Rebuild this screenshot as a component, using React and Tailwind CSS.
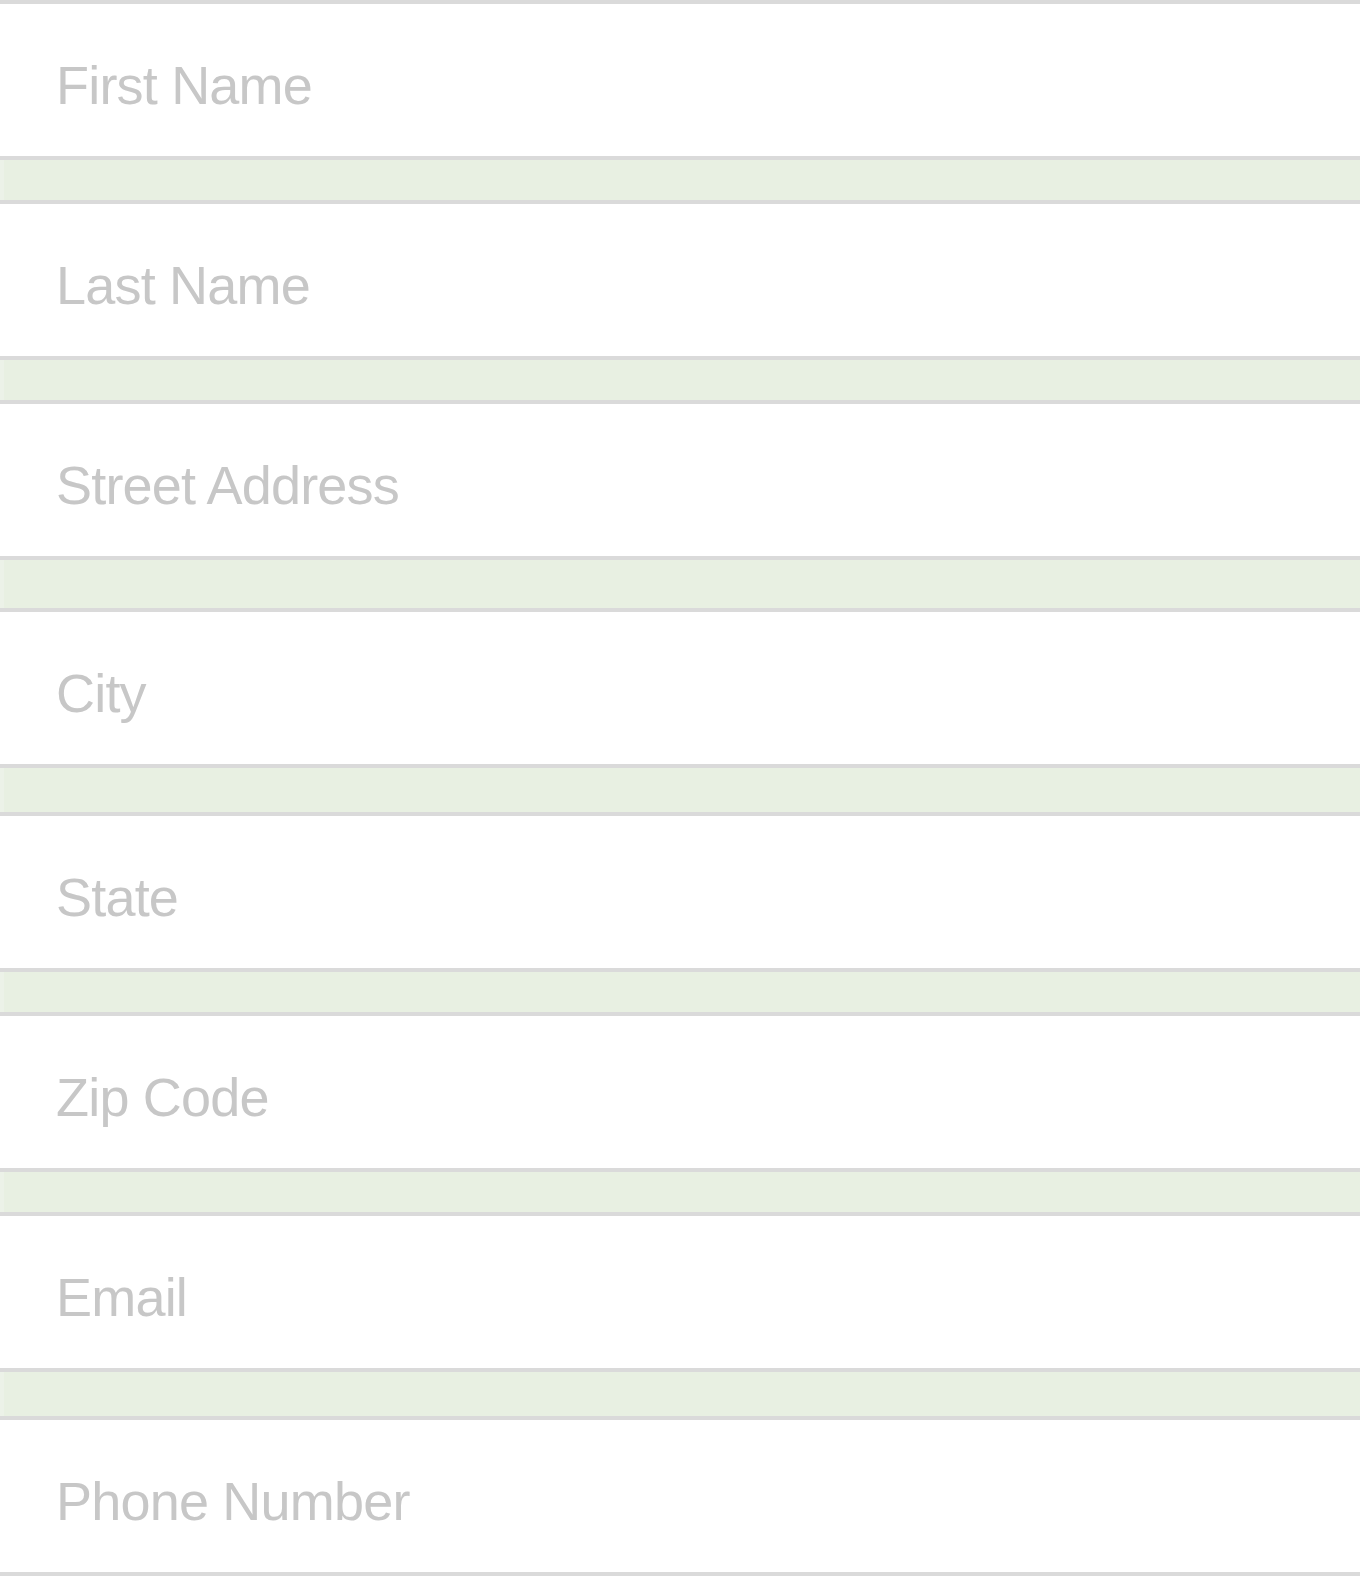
import React from 'react';

const fields = [
  { label: 'First Name', gap: 40 },
  { label: 'Last Name', gap: 40 },
  { label: 'Street Address', gap: 48 },
  { label: 'City', gap: 44 },
  { label: 'State', gap: 40 },
  { label: 'Zip Code', gap: 40 },
  { label: 'Email', gap: 44 },
  { label: 'Phone Number', gap: 0 },
];

const gapClass = {
  40: 'h-[40px]',
  44: 'h-[44px]',
  48: 'h-[48px]',
};

export default function App() {
  return (
    <div className="w-full bg-white font-['Liberation_Sans',Arial,sans-serif]">
      {fields.map((field) => (
        <React.Fragment key={field.label}>
          <input
            type="text"
            placeholder={field.label}
            className="block w-full h-[160px] border-y-4 border-[#dadada] bg-white pl-[56px] pt-[9px] text-[54px] tracking-[-0.8px] text-[#444] placeholder:text-[#c7c7c7] outline-none"
          />
          {field.gap > 0 && (
            <div className={`${gapClass[field.gap]} bg-[#e8f0e2] border-l-4 border-[#ecf2e8]`}></div>
          )}
        </React.Fragment>
      ))}
    </div>
  );
}
